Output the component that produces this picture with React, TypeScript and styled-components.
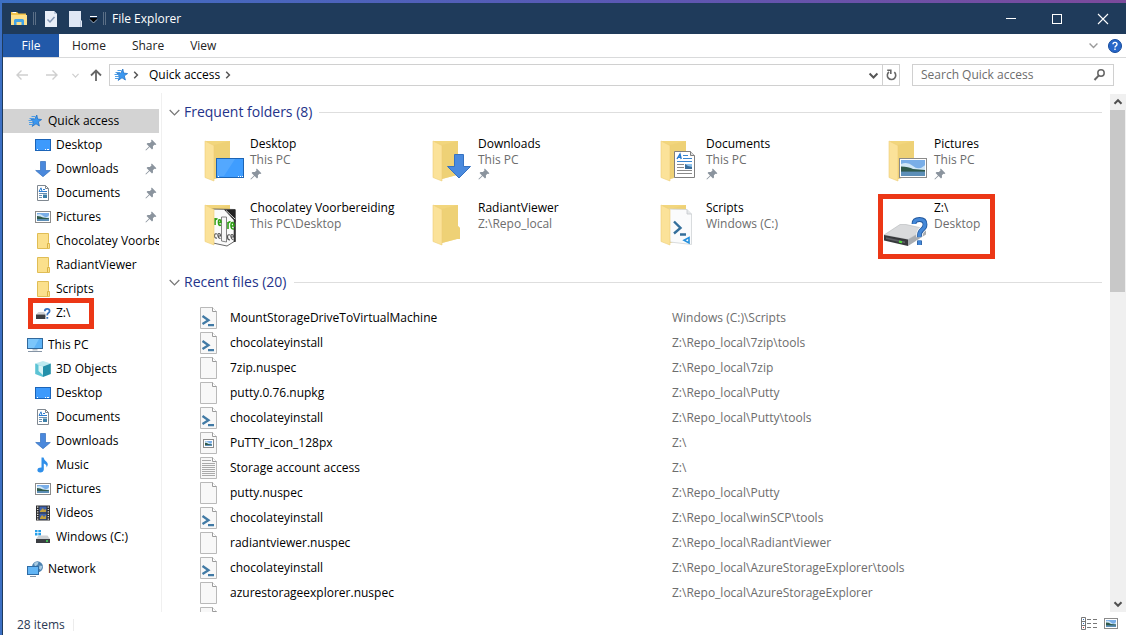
import React from "react";
import styled, { createGlobalStyle, css } from "styled-components";

const GlobalStyle = createGlobalStyle`
  * { box-sizing: border-box; }
  body { margin: 0; }
  button, input { font: inherit; color: inherit; }
  button { border: 0; padding: 0; background: none; }
  svg { display: block; flex: none; overflow: visible; }
`;

/* ---------- window frame ---------- */

const Backdrop = styled.div`
  height: 100vh;
  padding: 3px 0 0 2px;
  background: linear-gradient(90deg, #3c70c4, #5a58b4 55%, #7c4a9c);
  font: 12px/16px "Open Sans", "Noto Sans", sans-serif;
  color: #000;
`;

const Window = styled.div`
  display: flex;
  flex-direction: column;
  height: 100%;
  border-left: 1px solid #1f3b5b;
  background: #fff;
  overflow: hidden;
`;

const TitleBar = styled.header`
  display: flex;
  align-items: center;
  flex: none;
  gap: 6px;
  height: 31px;
  padding-left: 8px;
  background: #1f3b5b;
  color: #fff;
`;

const Separator = styled.span`
  width: 3px;
  height: 13px;
  border: solid #5b6f86;
  border-width: 0 1px;
`;

const IconButton = styled.button<{ $width: number }>`
  display: flex;
  justify-content: center;
  width: ${(p) => p.$width}px;
`;

const Title = styled.h1`
  flex: 1;
  margin: 0;
  font: inherit;
`;

const WindowButtons = styled.div`
  display: flex;
  align-self: stretch;
`;

const WindowButton = styled.button`
  display: flex;
  align-items: center;
  justify-content: center;
  width: 46px;
`;

/* ---------- ribbon and address row ---------- */

const Ribbon = styled.nav`
  display: flex;
  flex: none;
  height: 24px;
  border-bottom: 1px solid #d9dadb;
`;

const RibbonTab = styled.button<{ $primary?: boolean }>`
  padding: 0 13px;
  color: #222;
  ${(p) =>
    p.$primary &&
    css`
      width: 56px;
      background: #2259a9;
      color: #fff;
    `}
`;

const RibbonTools = styled.div`
  display: flex;
  align-items: center;
  gap: 10px;
  margin-left: auto;
  padding-right: 4px;
`;

const AddressRow = styled.div`
  display: flex;
  align-items: center;
  flex: none;
  height: 35px;
  padding: 0 12px 1px 4px;
`;

const AddressBox = styled.div`
  display: flex;
  align-items: center;
  flex: 1;
  height: 22px;
  margin-right: 12px;
  padding-left: 3px;
  border: 1px solid #d0d0d0;
`;

const Crumb = styled.button`
  margin: 0 4px 0 6px;
`;

const AddressTools = styled.div`
  display: flex;
  align-self: stretch;
  margin-left: auto;
`;

const AddressTool = styled.button<{ $divided?: boolean }>`
  display: flex;
  align-items: center;
  justify-content: center;
  width: 17px;
  border-left: ${(p) => (p.$divided ? "1px solid #d0d0d0" : "0")};
`;

const SearchBox = styled.label`
  display: flex;
  align-items: center;
  flex: 0 0 202px;
  height: 22px;
  padding: 0 8px;
  border: 1px solid #d0d0d0;
`;

const SearchInput = styled.input`
  flex: 1;
  min-width: 0;
  border: 0;
  padding: 0;
  outline: 0;
  background: none;
  &::placeholder {
    color: #6d6d6d;
    opacity: 1;
  }
`;

/* ---------- body ---------- */

const Body = styled.div`
  display: flex;
  flex: 1;
  min-height: 0;
`;

const Sidebar = styled.nav`
  flex: 0 0 159px;
  padding: 16px 2px 0 0;
  border-right: 1px solid #f0f0f0;
  overflow: hidden;
`;

const NavGroup = styled.ul`
  margin: 0 0 8px;
  padding: 0;
  list-style: none;
`;

const NavItem = styled.li`
  position: relative;
`;

const NavLink = styled.a<{ $level: number; $selected?: boolean }>`
  display: flex;
  align-items: center;
  gap: 5px;
  height: 24px;
  padding-left: ${(p) => (p.$level ? 32 : 24)}px;
  background: ${(p) => (p.$selected ? "#d3d3d3" : "transparent")};
  color: #000;
  text-decoration: none;
  white-space: nowrap;
`;

const NavLabel = styled.span`
  flex: 1;
  min-width: 0;
  overflow: hidden;
`;

const PinSlot = styled.span`
  padding-right: 2px;
`;

const Marker = styled.span<{ $area: "nav" | "tile" }>`
  position: absolute;
  border: 5px solid #ec3716;
  pointer-events: none;
  ${(p) =>
    p.$area === "nav"
      ? css`
          inset: -3px 65px -4px 25px;
        `
      : css`
          inset: -6px 119px 5px -8px;
        `}
`;

const Content = styled.main`
  flex: 1;
  min-width: 0;
  padding: 9px 8px 0 7px;
  overflow: hidden;
`;

const GroupHeading = styled.h2`
  display: flex;
  align-items: center;
  gap: 4px;
  height: 20px;
  margin: 0;
  font-size: 14px;
  line-height: 18px;
  font-weight: 400;
  color: #24338a;
  white-space: nowrap;
  &::after {
    content: "";
    flex: 1;
    height: 1px;
    margin-left: 3px;
    background: #dedede;
  }
`;

const TileGrid = styled.ul`
  display: grid;
  grid-template-columns: repeat(auto-fill, 228px);
  grid-auto-rows: 64px;
  margin: 14px -40px 8px 33px;
  padding: 0;
  list-style: none;
`;

const Tile = styled.li`
  position: relative;
`;

const TileLink = styled.a`
  display: flex;
  color: #000;
  text-decoration: none;
  white-space: nowrap;
`;

const TileText = styled.span`
  display: flex;
  flex-direction: column;
`;

const Muted = styled.span`
  color: #6d6d6d;
`;

const FileTable = styled.table`
  width: calc(100% - 31px);
  margin: 13px 0 0 31px;
  border-collapse: collapse;
  table-layout: fixed;
`;

const IconColumn = styled.col`
  width: 30px;
`;

const NameColumn = styled.col`
  width: 49%;
`;

const FileRow = styled.tr`
  height: 25px;
`;

const FileCell = styled.td<{ $muted?: boolean }>`
  padding: 0;
  height: 25px;
  vertical-align: middle;
  color: ${(p) => (p.$muted ? "#6d6d6d" : "#000")};
  white-space: nowrap;
`;

const Scrollbar = styled.div`
  display: flex;
  flex-direction: column;
  flex: 0 0 16px;
  margin-top: 1px;
  background: #f0f0f0;
`;

const ScrollButton = styled.button`
  display: flex;
  align-items: center;
  justify-content: center;
  height: 16px;
`;

const ScrollTrack = styled.div`
  flex: 1;
`;

const ScrollThumb = styled.div`
  height: 37.5%;
  margin-right: 1px;
  background: #c8c8c8;
`;

const StatusBar = styled.footer`
  display: flex;
  align-items: center;
  flex: none;
  height: 23px;
  padding: 2px 8px 0 14px;
  color: #2b3a55;
`;

const StatusText = styled.span`
  padding-right: 8px;
  border-right: 1px solid #ececec;
  line-height: 12px;
`;

const ViewButtons = styled.div`
  display: flex;
  align-items: center;
  gap: 7px;
  margin-left: auto;
  padding-bottom: 2px;
`;

/* ---------- icons ---------- */

const Chevron = ({ dir = "down", size = 8, color = "#666", width = 1 }: { dir?: string; size?: number; color?: string; width?: number }) => (
  <svg width={size} height={size} viewBox="0 0 8 8" fill="none" stroke={color} strokeWidth={width} aria-hidden>
    <path d={dir === "down" ? "M0.5 2.2 4 5.8 7.5 2.2" : dir === "up" ? "M0.5 5.8 4 2.2 7.5 5.8" : "M2.2 0.8 5.4 4 2.2 7.2"} />
  </svg>
);

const Pin = () => (
  <svg width="12" height="12" viewBox="0 0 12 12" fill="#8b949e" aria-hidden>
    <path d="M6.8 0.6 11.4 5.2 10.4 6 9.4 5.7 7.9 7.2 8 9.6 7 10.4 4.6 8 1 11.5 0.4 11 4 7.4 1.6 5 2.5 4 4.9 4.1 6.5 2.6 6.1 1.5Z" />
  </svg>
);

const Star = () => (
  <svg width="16" height="16" viewBox="0 0 16 16" aria-hidden>
    <path d="M9.8 2 10.6 6 14.6 6.6 11.3 8.8 12.4 13 9 10.8 5.2 13.4 6.5 9.2 4 6.6 7.8 6.2Z" fill="#3a97f0" stroke="#2474c6" strokeWidth="0.8" />
    <path d="M4.5 3.5H8.5M2.5 5.5H7M1.5 7.5H5.5M2 9.5H6M2 11.5H5.5" stroke="#4d9de6" />
  </svg>
);

const PictureShape = ({ x, y, w, h }: { x: number; y: number; w: number; h: number }) => (
  <g transform={`translate(${x} ${y})`}>
    <rect x="0.5" y="0.5" width={w - 1} height={h - 1} fill="#fff" stroke="#8b8b8b" />
    <rect x="2" y="2" width={w - 4} height={h - 4} fill="#79aee8" />
    <path d={`M2 ${h * 0.3}Q${w * 0.3} ${h * 0.15} ${w * 0.5} ${h * 0.4}T${w - 2} ${h * 0.36}V${h * 0.6}H2Z`} fill="#cfe6f7" />
    <path d={`M2 ${h * 0.42}Q${w * 0.35} ${h * 0.42} ${w * 0.5} ${h * 0.55}L${w - 2} ${h * 0.6}V${h * 0.7}H2Z`} fill="#2f5a4c" />
    <path d={`M2 ${h * 0.68}H${w - 2}V${h - 2}H2Z`} fill="#5d8fb8" />
  </g>
);

const navIcons: Record<string, React.ReactNode> = {
  desktop: (
    <>
      <rect x="0.5" y="2.5" width="15" height="11" fill="#3d9afc" stroke="#1b64b8" />
      <path d="M2 12.5H3M10 12.5H11M12 12.5H14" stroke="#fff" />
    </>
  ),
  download: <path d="M5.5 0.5H10.5V9.5H15.3L8 15.7 0.7 9.5H5.5Z" fill="#4a88dc" stroke="#3470bd" strokeWidth="0.7" />,
  document: (
    <>
      <path d="M2.5 0.5H10.5L13.5 3.5V15.5H2.5Z" fill="#fff" stroke="#808890" />
      <path d="M10.5 0.5V3.5H13.5" fill="none" stroke="#808890" />
      <path d="M4 6.5 6 2.8 7 6.5M8 4.5H10M4 6.5H12" fill="none" stroke="#2f7ed0" />
      <path d="M4 8.5H12M4 10.5H7M4 12.5H7" stroke="#6a8fb0" />
      <rect x="8" y="9.5" width="4" height="3.5" fill="#3b7fa8" />
    </>
  ),
  picture: <PictureShape x={0} y={2} w={16} h={12} />,
  folder: (
    <>
      <path d="M2.5 0.5H13.5V9.5L14.5 10.5V15.5H2.5Z" fill="#fbe08c" stroke="#e0bd55" />
      <path d="M12.5 15V10.5H14" fill="none" stroke="#d9b244" />
    </>
  ),
  drive: (
    <>
      <path d="M3.5 7H9L11 9.5H1Z" fill="#cfd2d5" />
      <path d="M1 9.5H10.5V14H1Z" fill="#3b3e42" />
      <path d="M9.8 6.2Q9.8 3.8 12.2 3.8T14.6 6Q14.6 7.2 13.3 8T12.3 10.4M12.3 12V13.8" fill="none" stroke="#fff" strokeWidth="3.2" />
      <path d="M9.8 6.2Q9.8 3.8 12.2 3.8T14.6 6Q14.6 7.2 13.3 8T12.3 10.4M12.3 12V13.8" fill="none" stroke="#3572bd" strokeWidth="1.8" />
    </>
  ),
  pc: (
    <>
      <rect x="0.5" y="1.5" width="15" height="10" fill="#5fb4f7" stroke="#32699c" />
      <path d="M1 2H12L7 11H1Z" fill="#7cc6fb" />
      <path d="M5.5 12H10.5V13.5H5.5Z" fill="#b9c2ca" />
      <path d="M1 14.5H15" stroke="#8594a5" />
    </>
  ),
  cube: (
    <>
      <path d="M0.2 2.5 8 0 15.8 2.5 8 5.5Z" fill="#bdeaf0" />
      <path d="M0.2 2.5 8 5.5V16L0.2 13Z" fill="#5cc3d4" />
      <path d="M15.8 2.5 8 5.5V16L15.8 13Z" fill="#2390aa" />
      <path d="M3.5 4 8 5.5V14L3.5 10Z" fill="#d9f4f6" />
    </>
  ),
  music: (
    <path d="M6.5 0.5H8.5Q9 3 11.5 4.8 14 7 11.6 10.6 12 7.5 8.8 6.4V12.5Q8.5 15.5 5.2 15.5 2.3 15.4 2.4 13 2.8 10.5 6.5 10.6Z" fill="#2f8fea" />
  ),
  video: (
    <>
      <rect x="1" y="0.5" width="14" height="15" fill="#2e2e30" />
      <rect x="4.5" y="1.5" width="7" height="6" fill="#3f63b0" />
      <rect x="4.5" y="8.5" width="7" height="6" fill="#3f63b0" />
      <path d="M5 6 8 3 9 5 11 4V7H5ZM5 13 7 10 9 12 11 10V14H5Z" fill="#c4a03c" />
      <path d="M2.7 1.5V15M13.3 1.5V15" stroke="#e8e8e8" strokeWidth="1.3" strokeDasharray="1.2 1.2" />
    </>
  ),
  windows: (
    <>
      <path d="M0 1H2.5V3.2H0ZM3.3 1H6V3.2H3.3ZM0 4H2.5V6.4H0ZM3.3 4H6V6.4H3.3Z" fill="#25a0ea" />
      <path d="M3.5 6.5H12.5L15 10H1Z" fill="#cdd0d3" />
      <path d="M1 10H15V14H1Z" fill="#3b3e42" />
      <path d="M11 12H13" stroke="#45e05a" strokeWidth="1.4" />
    </>
  ),
  network: (
    <>
      <circle cx="10.5" cy="5.8" r="5.5" fill="#4c82b0" />
      <path d="M7 2.5Q9 0.5 11.5 1.2L10.5 3.8 8 5.5ZM12.5 4.5 15.5 5 14 9 12 7.5Z" fill="#a9cbe2" />
      <rect x="0.5" y="5.5" width="11" height="8" fill="#62b5f5" stroke="#2f6ca5" />
      <path d="M3 15.5H9" stroke="#8594a5" />
    </>
  ),
};

const NavIcon = ({ name }: { name: string }) =>
  name === "star" ? (
    <Star />
  ) : (
    <svg width="16" height="16" viewBox="0 0 16 16" aria-hidden>
      {navIcons[name]}
    </svg>
  );

const tileOverlays: Record<string, React.ReactNode> = {
  none: null,
  desktop: (
    <>
      <rect x="14.5" y="22.5" width="27" height="19" fill="#3f9dff" stroke="#1d64b4" />
      <path d="M15 23H33L22 40H15Z" fill="#53a8ff" />
      <path d="M16 40.5H17M36 40.5H37M38 40.5H39M40 40.5H41" stroke="#fff" />
    </>
  ),
  download: <path d="M24.5 18.5H33.5V30.5H40.5L29 42 17.5 30.5H24.5Z" fill="#4a8ade" stroke="#3572c2" />,
  document: (
    <>
      <path d="M16.5 15.5H32.5L36.5 19.5V41.5H16.5Z" fill="#fff" stroke="#7f7f7f" />
      <path d="M32.5 15.5V19.5H36.5" fill="#ddd" stroke="#7f7f7f" />
      <path d="M19 23 22 18 23.2 23M20 21.3H23" fill="none" stroke="#2479cf" strokeWidth="1.4" />
      <path d="M25 19.5H30M25 22.5H34M19 25.5H34" stroke="#3b86cf" />
      <path d="M19 28.5H26M19 31.5H26M19 34.5H34M19 37.5H34" stroke="#8a8a8a" />
      <rect x="27" y="28" width="7" height="5" fill="#3c6f9b" />
      <path d="M27 28H34V31L30 30Z" fill="#8cc0ea" />
    </>
  ),
  picture: <PictureShape x={13} y={22} w={28} h={20} />,
};

const FolderFlap = () => <path d="M3 5 12 9.5V45L3 41.5Z" fill="#fbe299" stroke="#efcf77" strokeWidth="0.6" />;

const TileIcon = ({ name }: { name: string }) => {
  if (name === "drive") {
    const mark = "M28 24Q28 19.5 33.5 19.5T39 24.5Q39 27.5 36 29.8T33.5 37M33.5 40.5V45";
    return (
      <svg width="48" height="48" viewBox="0 0 48 48" aria-hidden>
        <path d="M-2 35 14 24.5H20L40 29 22 39.5Z" fill="#d9dadc" stroke="#b6b8bb" strokeWidth="0.6" />
        <path d="M22 39.5 40 29V34.5L22 46Z" fill="#a9acb0" />
        <path d="M-2 35 22 39.5V46L-2 40.5Z" fill="#37393c" />
        <path d="M0 37.2 19 41.4V43.2L0 39Z" fill="#5c5f63" />
        <path d="M13 41.5 16 42.2" stroke="#52e03c" strokeWidth="2" />
        <path d={mark} fill="none" stroke="#fff" strokeWidth="6.4" />
        <path d={mark} fill="none" stroke="#20579d" strokeWidth="4.8" />
        <path d={mark} fill="none" stroke="#4488d8" strokeWidth="3.2" />
      </svg>
    );
  }
  return (
    <svg width="48" height="48" viewBox="0 0 48 48" aria-hidden>
      <path d="M4 5H28V26L30 28V39H27L12 43Z" fill="#f2d67d" />
      <path d="M12 9V43L27 39H30V28L28 26V5Z" fill="#edce74" opacity="0.7" />
      {name === "scripts" && (
        <>
          <path d="M9 9 29 9.5 33.5 14V44.5L12 42Z" fill="#fafbfc" stroke="#cfd3d6" strokeWidth="0.8" />
          <path d="M29 9.5V14H33.5" fill="#e5e8ea" stroke="#c4c8cc" strokeWidth="0.8" />
          <path d="M16 21.5 22.5 28 16 33.5M22 34.5H28" fill="none" stroke="#346f9b" strokeWidth="2.4" />
          <path d="M31 37.5V43L26 40.2Z" fill="none" stroke="#2590dc" strokeWidth="1.6" />
        </>
      )}
      {name === "chocolatey" && (
        <>
          <path d="M9 9 33 9.5V41L25 46 11 43Z" fill="#fafafa" stroke="#444" strokeWidth="0.8" />
          <path d="M22 9.5H33.5V22Z" fill="#222" />
          <path d="M24 10.5 33 19" stroke="#ddd" />
          <path d="M32.7 20V42" stroke="#333" strokeWidth="2" />
          <path d="M19.5 17H24.5V42L19.5 41Z" fill="#f7f7f7" stroke="#666" strokeWidth="0.8" />
          <path d="M13 18V25M13 20.5Q14 18.5 15.5 19M16.5 22.5H19Q19 19.8 17.6 19.8T16.5 23 19 25M26 22V29M26 23.5Q27 21.5 28.5 22M29 26H32Q32 22.6 30.4 22.6T29 26 32 29" fill="none" stroke="#2fa016" strokeWidth="1.6" />
          <path d="M15 34Q12.5 33 12.5 35.7T15 38M16 36H18.5Q18.5 33.5 17 33.5T16 36 18.5 38.5M28 35Q25.5 34 25.5 37T28 40M29 37H31.5Q31.5 34.5 30 34.5T29 37 31.5 40" fill="none" stroke="#555" strokeWidth="1.2" />
        </>
      )}
      <FolderFlap />
      {tileOverlays[name]}
    </svg>
  );
};

const FileIcon = ({ kind }: { kind: string }) => (
  <svg width="17" height="22" viewBox="0 0 17 22" aria-hidden>
    <path d="M0.5 0.5H12.5L16.5 4.5V21.5H0.5Z" fill="#f8f8f8" stroke="#b9b9b9" />
    <path d="M12.5 0.5V4.5H16.5" fill="#fff" stroke="#9c9c9c" />
    {kind === "ps" && <path d="M2.5 9 8.5 13.2 2.5 17M8 18.2H14" fill="none" stroke="#427ba6" strokeWidth="2.3" />}
    {kind === "text" && (
      <path d="M2 3.5H11M2 6.5H15M2 8.5H15M2 10.5H15M2 12.5H15M2 14.5H15M2 16.5H15M2 18.5H15" stroke="#aaaaaa" />
    )}
    {kind === "image" && <PictureShape x={3} y={7} w={11} h={9} />}
  </svg>
);

/* ---------- data ---------- */

type Place = { icon: string; label: string; pinned?: boolean; marked?: boolean };

const quickAccess: Place[] = [
  { icon: "desktop", label: "Desktop", pinned: true },
  { icon: "download", label: "Downloads", pinned: true },
  { icon: "document", label: "Documents", pinned: true },
  { icon: "picture", label: "Pictures", pinned: true },
  { icon: "folder", label: "Chocolatey Voorbereiding" },
  { icon: "folder", label: "RadiantViewer" },
  { icon: "folder", label: "Scripts" },
  { icon: "drive", label: "Z:\\", marked: true },
];

const thisPc: Place[] = [
  { icon: "cube", label: "3D Objects" },
  { icon: "desktop", label: "Desktop" },
  { icon: "document", label: "Documents" },
  { icon: "download", label: "Downloads" },
  { icon: "music", label: "Music" },
  { icon: "picture", label: "Pictures" },
  { icon: "video", label: "Videos" },
  { icon: "windows", label: "Windows (C:)" },
];

const folders = [
  { icon: "desktop", name: "Desktop", place: "This PC", pinned: true },
  { icon: "download", name: "Downloads", place: "This PC", pinned: true },
  { icon: "document", name: "Documents", place: "This PC", pinned: true },
  { icon: "picture", name: "Pictures", place: "This PC", pinned: true },
  { icon: "chocolatey", name: "Chocolatey Voorbereiding", place: "This PC\\Desktop" },
  { icon: "none", name: "RadiantViewer", place: "Z:\\Repo_local" },
  { icon: "scripts", name: "Scripts", place: "Windows (C:)" },
  { icon: "drive", name: "Z:\\", place: "Desktop", marked: true },
];

const files: [string, string, string][] = [
  ["ps", "MountStorageDriveToVirtualMachine", "Windows (C:)\\Scripts"],
  ["ps", "chocolateyinstall", "Z:\\Repo_local\\7zip\\tools"],
  ["blank", "7zip.nuspec", "Z:\\Repo_local\\7zip"],
  ["blank", "putty.0.76.nupkg", "Z:\\Repo_local\\Putty"],
  ["ps", "chocolateyinstall", "Z:\\Repo_local\\Putty\\tools"],
  ["image", "PuTTY_icon_128px", "Z:\\"],
  ["text", "Storage account access", "Z:\\"],
  ["blank", "putty.nuspec", "Z:\\Repo_local\\Putty"],
  ["ps", "chocolateyinstall", "Z:\\Repo_local\\winSCP\\tools"],
  ["blank", "radiantviewer.nuspec", "Z:\\Repo_local\\RadiantViewer"],
  ["ps", "chocolateyinstall", "Z:\\Repo_local\\AzureStorageExplorer\\tools"],
  ["blank", "azurestorageexplorer.nuspec", "Z:\\Repo_local\\AzureStorageExplorer"],
  ["blank", "", ""],
];

/* ---------- parts ---------- */

const NavEntry = ({ place, level = 1, selected }: { place: Place; level?: number; selected?: boolean }) => (
  <NavItem>
    <NavLink href="#" $level={level} $selected={selected}>
      <NavIcon name={place.icon} />
      <NavLabel>{place.label}</NavLabel>
      {place.pinned && (
        <PinSlot>
          <Pin />
        </PinSlot>
      )}
    </NavLink>
    {place.marked && <Marker $area="nav" />}
  </NavItem>
);

const NavTree = ({ root, places = [], selected }: { root: Place; places?: Place[]; selected?: boolean }) => (
  <NavGroup>
    <NavEntry place={root} level={0} selected={selected} />
    {places.map((place) => (
      <NavEntry key={place.label} place={place} />
    ))}
  </NavGroup>
);

export default function App() {
  return (
    <Backdrop>
      <GlobalStyle />
      <Window>
        <TitleBar>
          <svg width="16" height="16" viewBox="0 0 16 16" aria-hidden>
            <path d="M0 1H6L7.5 2.5H15V6H0Z" fill="#f3c44c" />
            <path d="M0 4H16V14H0Z" fill="#fde08a" />
            <path d="M1.5 1.5H5" stroke="#fff" />
            <path d="M3 14V9.5Q3 8 4.5 8H11.5Q13 8 13 9.5V14H10.5V11H5.5V14Z" fill="#43a3e6" />
          </svg>
          <Separator />
          <IconButton $width={18} aria-label="Properties">
            <svg width="12" height="16" viewBox="0 0 12 16">
              <path d="M0 0H9L12 3V16H0Z" fill="#e9eff8" />
              <path d="M9 0V3H12" fill="#c0cde0" />
              <path d="M2.5 8.5 5 11 9.5 6" fill="none" stroke="#8497b5" strokeWidth="1.5" />
            </svg>
          </IconButton>
          <IconButton $width={18} aria-label="New folder">
            <svg width="13" height="16" viewBox="0 0 13 16">
              <path d="M0 0H12V9L13 10V16H0Z" fill="#dfe7f4" />
              <path d="M11.5 16V10" stroke="#b7c4da" />
            </svg>
          </IconButton>
          <IconButton $width={7} aria-label="Customize toolbar">
            <svg width="7" height="8" viewBox="0 0 7 8">
              <path d="M0 1.5H7" stroke="#fff" />
              <path d="M0 3H7V4L3.5 7.5 0 4Z" fill="#000" />
              <path d="M0 4.5 3.5 8 7 4.5" fill="none" stroke="#cdd5df" strokeWidth="0.7" />
            </svg>
          </IconButton>
          <Separator />
          <Title>File Explorer</Title>
          <WindowButtons>
            <WindowButton aria-label="Minimize">
              <svg width="10" height="10" viewBox="0 0 10 10">
                <path d="M0 4.5H10" stroke="#fff" />
              </svg>
            </WindowButton>
            <WindowButton aria-label="Maximize">
              <svg width="10" height="10" viewBox="0 0 10 10">
                <rect x="0.5" y="0.5" width="9" height="9" fill="none" stroke="#fff" />
              </svg>
            </WindowButton>
            <WindowButton aria-label="Close">
              <svg width="10" height="10" viewBox="0 0 10 10">
                <path d="M0 0 10 10M10 0 0 10" stroke="#fff" strokeWidth="1.1" />
              </svg>
            </WindowButton>
          </WindowButtons>
        </TitleBar>

        <Ribbon>
          <RibbonTab $primary>File</RibbonTab>
          <RibbonTab>Home</RibbonTab>
          <RibbonTab>Share</RibbonTab>
          <RibbonTab>View</RibbonTab>
          <RibbonTools>
            <Chevron size={9} color="#9a9a9a" width={1.2} />
            <svg width="14" height="14" viewBox="0 0 14 14" aria-hidden>
              <circle cx="7" cy="7" r="6.5" fill="#2767c9" stroke="#154a9c" />
              <path d="M5 5.2Q5 3.4 7 3.4T9 5.2Q9 6.2 8 6.8T7 8.5M7 9.6V11" fill="none" stroke="#fff" strokeWidth="1.4" />
            </svg>
          </RibbonTools>
        </Ribbon>

        <AddressRow>
          <IconButton $width={30} aria-label="Back">
            <svg width="12" height="10" viewBox="0 0 12 10" fill="none" stroke="#cfcfcf" strokeWidth="1.4">
              <path d="M12 5H1M5.5 0.5 1 5 5.5 9.5" />
            </svg>
          </IconButton>
          <IconButton $width={30} aria-label="Forward">
            <svg width="12" height="10" viewBox="0 0 12 10" fill="none" stroke="#cfcfcf" strokeWidth="1.4">
              <path d="M0 5H11M6.5 0.5 11 5 6.5 9.5" />
            </svg>
          </IconButton>
          <IconButton $width={16} aria-label="Recent locations">
            <Chevron size={7} color="#cfcfcf" width={1.4} />
          </IconButton>
          <IconButton $width={26} aria-label="Up">
            <svg width="12" height="12" viewBox="0 0 12 12" fill="none" stroke="#666" strokeWidth="1.8">
              <path d="M6 12V1.5M1 6.5 6 1.5 11 6.5" />
            </svg>
          </IconButton>
          <AddressBox>
            <Star />
            <IconButton $width={14} aria-label="Show locations">
              <Chevron dir="right" color="#555" width={1.5} />
            </IconButton>
            <Crumb>Quick access</Crumb>
            <Chevron dir="right" color="#555" width={1.5} />
            <AddressTools>
              <AddressTool aria-label="Previous locations">
                <Chevron size={9} color="#555" width={1.7} />
              </AddressTool>
              <AddressTool $divided aria-label="Refresh">
                <svg width="11" height="12" viewBox="0 0 11 12" fill="none" stroke="#666" strokeWidth="1.6">
                  <path d="M8.3 3.2A4.2 4.2 0 1 1 3 3M1.2 1.2H4.8V5" />
                </svg>
              </AddressTool>
            </AddressTools>
          </AddressBox>
          <SearchBox>
            <SearchInput placeholder="Search Quick access" aria-label="Search Quick access" />
            <svg width="11" height="12" viewBox="0 0 11 12" fill="none" stroke="#666" aria-hidden>
              <circle cx="7" cy="4" r="3.2" strokeWidth="1.5" />
              <path d="M4.6 6.6 0.5 11" strokeWidth="2" />
            </svg>
          </SearchBox>
        </AddressRow>

        <Body>
          <Sidebar>
            <NavTree root={{ icon: "star", label: "Quick access" }} places={quickAccess} selected />
            <NavTree root={{ icon: "pc", label: "This PC" }} places={thisPc} />
            <NavTree root={{ icon: "network", label: "Network" }} />
          </Sidebar>

          <Content>
            <GroupHeading>
              <Chevron size={11} color="#777" width={0.9} />
              Frequent folders (8)
            </GroupHeading>
            <TileGrid>
              {folders.map((f) => (
                <Tile key={f.name}>
                  <TileLink href="#">
                    <TileIcon name={f.icon} />
                    <TileText>
                      <span>{f.name}</span>
                      <Muted>{f.place}</Muted>
                      {f.pinned && <Pin />}
                    </TileText>
                  </TileLink>
                  {f.marked && <Marker $area="tile" />}
                </Tile>
              ))}
            </TileGrid>

            <GroupHeading>
              <Chevron size={11} color="#777" width={0.9} />
              Recent files (20)
            </GroupHeading>
            <FileTable aria-label="Recent files">
              <colgroup>
                <IconColumn />
                <NameColumn />
                <col />
              </colgroup>
              <tbody>
                {files.map(([kind, name, place], i) => (
                  <FileRow key={i}>
                    <FileCell>
                      <FileIcon kind={kind} />
                    </FileCell>
                    <FileCell>{name}</FileCell>
                    <FileCell $muted>{place}</FileCell>
                  </FileRow>
                ))}
              </tbody>
            </FileTable>
          </Content>

          <Scrollbar>
            <ScrollButton aria-label="Scroll up">
              <Chevron dir="up" color="#505050" width={2} />
            </ScrollButton>
            <ScrollTrack>
              <ScrollThumb />
            </ScrollTrack>
            <ScrollButton aria-label="Scroll down">
              <Chevron color="#505050" width={2} />
            </ScrollButton>
          </Scrollbar>
        </Body>

        <StatusBar>
          <StatusText>28 items</StatusText>
          <ViewButtons>
            <IconButton $width={16} aria-label="Details view">
              <svg width="16" height="13" viewBox="0 0 16 13" fill="none" stroke="#777">
                <path d="M0.5 0.5H4.5V12.5H0.5ZM0.5 4.5H4.5M0.5 8.5H4.5M6 2.5H10M12 2.5H16M6 6.5H10M12 6.5H16M6 10.5H10M12 10.5H16" />
                <path d="M2 2.5H3M2 6.5H3" stroke="#3572bd" />
                <path d="M2 10.5H3" stroke="#c33" />
              </svg>
            </IconButton>
            <IconButton $width={14} aria-label="Large icons view">
              <svg width="14" height="11" viewBox="0 0 14 11">
                <PictureShape x={0} y={0} w={14} h={11} />
              </svg>
            </IconButton>
          </ViewButtons>
        </StatusBar>
      </Window>
    </Backdrop>
  );
}
